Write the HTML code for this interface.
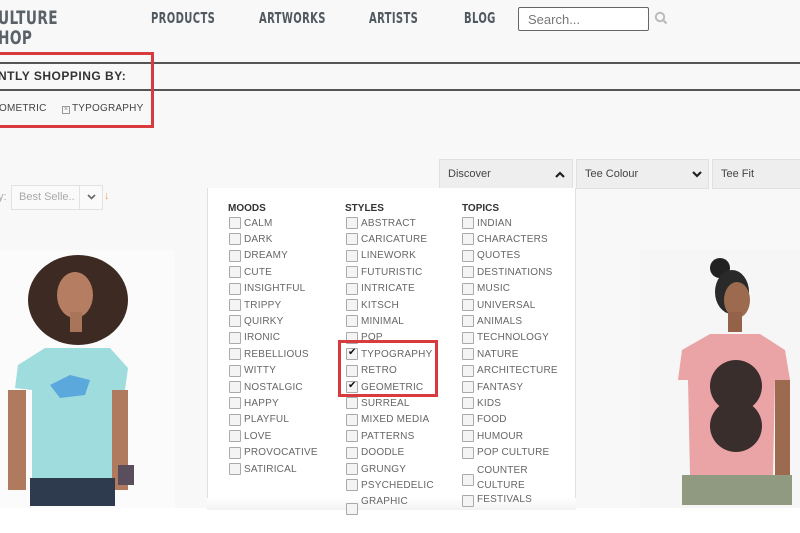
<!DOCTYPE html>
<html><head><meta charset="utf-8"><style>
*{margin:0;padding:0;box-sizing:border-box}
body{width:800px;height:533px;overflow:hidden;background:#f8f8f8;font-family:"Liberation Sans",sans-serif;position:relative;color:#555}
.a{position:absolute;white-space:nowrap}
.nav{font-family:"DejaVu Sans Condensed","Liberation Sans Narrow",sans-serif;font-weight:bold;font-size:15px;color:#505860;letter-spacing:0.5px;transform-origin:0 0;transform:scaleX(0.74)}
.lbl{font-size:10px;color:#666;letter-spacing:0.2px}
.cb{position:absolute;width:12px;height:12px;border:1px solid #aaa;background:#f4f4f4;border-radius:1px}
.h{font-size:10px;font-weight:bold;color:#333}
</style></head><body>
<div class="a nav" style="left:-2px;top:8px;font-size:19px;line-height:20px;color:#5a6168;transform:scaleX(0.8)">ULTURE<br>HOP</div>
<div class="a nav" style="left:151px;top:9px">PRODUCTS</div>
<div class="a nav" style="left:259px;top:9px">ARTWORKS</div>
<div class="a nav" style="left:369px;top:9px">ARTISTS</div>
<div class="a nav" style="left:464px;top:9px">BLOG</div>
<div class="a" style="left:518px;top:7px;width:131px;height:24px;border:1px solid #666;border-radius:2px;background:#fff;font-size:13px;color:#777;padding:4px 0 0 9px">Search...</div>
<svg class="a" style="left:654px;top:11px" width="14" height="14"><circle cx="6" cy="6" r="4.2" fill="none" stroke="#bbb" stroke-width="2"/><line x1="9" y1="9" x2="12.5" y2="12.5" stroke="#bbb" stroke-width="2.2"/></svg>
<div class="a" style="left:0;top:62px;width:800px;height:2px;background:#555"></div>
<div class="a" style="left:0;top:89px;width:800px;height:2px;background:#555"></div>
<div class="a" style="left:-2px;top:69px;font-size:12px;font-weight:bold;color:#333;letter-spacing:0.5px">NTLY SHOPPING BY:</div>
<div class="a lbl" style="left:-1px;top:103px;color:#444">OMETRIC</div>
<div class="a lbl" style="left:62px;top:103px;color:#444"><span style="display:inline-block;width:8px;height:8px;border:1px solid #999;font-size:7px;line-height:6px;text-align:center;color:#888;margin-right:2px">×</span>TYPOGRAPHY</div>
<div class="a" style="left:-10px;top:52px;width:164px;height:76px;border:3px solid #d93a3e"></div>
<div class="a" style="left:-2px;top:191px;font-size:11px;color:#aaa">y:</div>
<div class="a" style="left:11px;top:185px;width:92px;height:25px;border:1px solid #e2e2e2;background:#fafafa"></div>
<div class="a" style="left:79px;top:185px;width:1px;height:25px;background:#e2e2e2"></div>
<div class="a" style="left:19px;top:191px;font-size:11px;color:#aaa">Best Selle..</div>
<svg class="a" style="left:87px;top:194px" width="9" height="7"><path d="M1 1 L4.5 4.5 L8 1" fill="none" stroke="#666" stroke-width="1.6"/></svg>
<div class="a" style="left:104px;top:190px;font-size:11px;color:#e8a060">↓</div>
<!-- left photo -->
<svg class="a" style="left:0;top:250px" width="175" height="260">
<rect width="175" height="260" fill="#fbfbfb"/>
<ellipse cx="78" cy="50" rx="50" ry="45" fill="#3d2a22"/>
<ellipse cx="75" cy="45" rx="18" ry="23" fill="#b57e62"/>
<rect x="70" y="62" width="12" height="20" fill="#a8745a"/>
<path d="M18 115 L45 98 L110 98 L128 118 L125 140 L115 140 L115 230 L32 230 L32 140 L15 138 Z" fill="#9fdcde"/>
<path d="M50 135 L70 125 L90 130 L85 145 L60 148Z" fill="#5aa8dc"/>
<rect x="8" y="140" width="18" height="100" fill="#b07a5f"/>
<rect x="112" y="140" width="16" height="100" fill="#b07a5f"/>
<rect x="118" y="215" width="16" height="20" fill="#5a4d5c"/>
<rect x="30" y="228" width="85" height="28" fill="#2e3b4e"/>
</svg>
<!-- right photo -->
<svg class="a" style="left:640px;top:250px" width="160" height="260">
<rect width="160" height="260" fill="#f6f6f6"/>
<ellipse cx="80" cy="18" rx="10" ry="10" fill="#222"/>
<ellipse cx="92" cy="42" rx="17" ry="22" fill="#2a2a2a"/>
<ellipse cx="97" cy="50" rx="13" ry="18" fill="#9c6a4f"/>
<rect x="88" y="62" width="14" height="20" fill="#946249"/>
<path d="M42 100 L70 84 L120 84 L145 100 L150 130 L135 130 L133 225 L50 225 L48 130 L38 130 Z" fill="#eaa4a6"/>
<circle cx="96" cy="136" r="26" fill="#3a2e2c"/>
<circle cx="96" cy="176" r="26" fill="#3a2e2c"/>
<rect x="135" y="130" width="15" height="110" fill="#9c6a4f"/>
<rect x="42" y="225" width="110" height="30" fill="#8f9a80"/>
</svg>
<!-- tabs -->
<div class="a" style="left:439px;top:159px;width:134px;height:30px;background:#eee;border:1px solid #e0e0e0;font-size:11px;color:#444;padding:8px 0 0 8px">Discover<svg style="position:absolute;right:7px;top:11px" width="10" height="7"><path d="M1 6 L5 2 L9 6" fill="none" stroke="#222" stroke-width="2.2"/></svg></div>
<div class="a" style="left:576px;top:159px;width:133px;height:30px;background:#eee;border:1px solid #e0e0e0;font-size:11px;color:#444;padding:8px 0 0 8px">Tee Colour<svg style="position:absolute;right:6px;top:11px" width="10" height="7"><path d="M1 1 L5 5 L9 1" fill="none" stroke="#222" stroke-width="2.2"/></svg></div>
<div class="a" style="left:712px;top:159px;width:100px;height:30px;background:#eee;border:1px solid #e0e0e0;font-size:11px;color:#444;padding:8px 0 0 8px">Tee Fit</div>
<div class="a" style="left:207px;top:188px;width:369px;height:330px;background:#fff;border:1px solid #e0e0e0;border-top:none"></div>
<div class="a" style="left:440px;top:188px;width:132px;height:2px;background:#fff"></div>
<div class="a" style="left:0;top:508px;width:800px;height:25px;background:#fff"></div>
<div class="a" style="left:207px;top:498px;width:369px;height:12px;background:linear-gradient(#fff,#f2f2f2)"></div>
<div class="a h" style="left:228px;top:203px">MOODS</div>
<div class="a h" style="left:345px;top:203px">STYLES</div>
<div class="a h" style="left:462px;top:203px">TOPICS</div>
<div id="lists"></div>
<script>
var cols=[[229,["CALM","DARK","DREAMY","CUTE","INSIGHTFUL","TRIPPY","QUIRKY","IRONIC","REBELLIOUS","WITTY","NOSTALGIC","HAPPY","PLAYFUL","LOVE","PROVOCATIVE","SATIRICAL"]],
[346,["ABSTRACT","CARICATURE","LINEWORK","FUTURISTIC","INTRICATE","KITSCH","MINIMAL","POP","TYPOGRAPHY","RETRO","GEOMETRIC","SURREAL","MIXED MEDIA","PATTERNS","DOODLE","GRUNGY","PSYCHEDELIC"]],
[462,["INDIAN","CHARACTERS","QUOTES","DESTINATIONS","MUSIC","UNIVERSAL","ANIMALS","TECHNOLOGY","NATURE","ARCHITECTURE","FANTASY","KIDS","FOOD","HUMOUR","POP CULTURE"]]];
var h="";
cols.forEach(function(c){c[1].forEach(function(t,i){var y=217+i*16.4;var chk=(t=="TYPOGRAPHY"||t=="GEOMETRIC");
h+='<div class="cb" style="left:'+c[0]+'px;top:'+(y)+'px">'+(chk?'<span style="position:absolute;left:1px;top:-2px;font-size:10px;color:#111">&#10004;</span>':'')+'</div><div class="a lbl" style="left:'+(c[0]+15)+'px;top:'+(y+0.5)+'px">'+t+'</div>';});});
h+='<div class="a lbl" style="left:477px;top:463px;line-height:15px">COUNTER<br>CULTURE</div>';
h+='<div class="cb" style="left:462px;top:474px"></div>';
h+='<div class="cb" style="left:462px;top:495px"></div><div class="a lbl" style="left:477px;top:494px">FESTIVALS</div>';
h+='<div class="cb" style="left:346px;top:503px"></div><div class="a lbl" style="left:361px;top:496px">GRAPHIC</div>';
document.getElementById("lists").innerHTML=h;
</script>
<div class="a" style="left:338px;top:340px;width:100px;height:57px;border:3px solid #d93a3e"></div>
</body></html>
